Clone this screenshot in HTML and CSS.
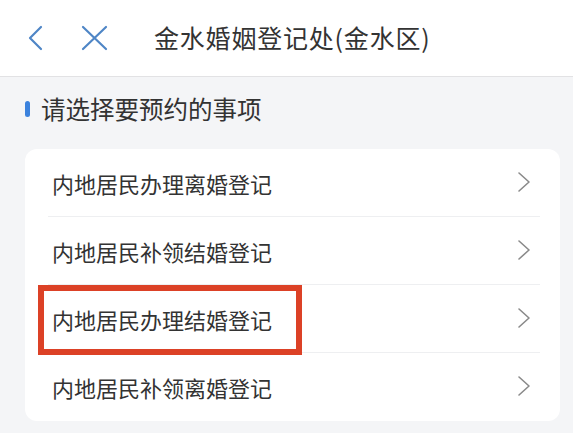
FILE: index.html
```html
<!DOCTYPE html>
<html lang="zh-CN">
<head>
    <meta charset="UTF-8">
    <meta name="viewport" content="width=device-width, initial-scale=1.0">
    <title>金水婚姻登记处(金水区)</title>
    <link rel="stylesheet" href="styles.css">
</head>
<body>
    <header class="topbar">
        <span class="nav-btn back">
            <svg width="16" height="26" viewBox="0 0 16 26"><path d="M14 2 L3 13 L14 24" fill="none" stroke="#4f86c6" stroke-width="2.2" stroke-linecap="round" stroke-linejoin="round"/></svg>
        </span>
        <span class="nav-btn close">
            <svg width="27" height="26" viewBox="0 0 27 26"><path d="M2 2 L25 24 M25 2 L2 24" fill="none" stroke="#4f86c6" stroke-width="2.2" stroke-linecap="round"/></svg>
        </span>
        <h1 class="page-title">金水婚姻登记处(金水区)</h1>
    </header>

    <div class="section-title">
        <span class="mark"></span>
        <span>请选择要预约的事项</span>
    </div>

    <!-- Liste des démarches -->
    <ul class="card">
        <li class="item">
            <span>内地居民办理离婚登记</span>
            <svg class="arrow" width="14" height="22" viewBox="0 0 14 22"><path d="M2 2 L12 11 L2 20" fill="none" stroke="#8a8a8a" stroke-width="1.6" stroke-linecap="round" stroke-linejoin="round"/></svg>
        </li>
        <li class="item">
            <span>内地居民补领结婚登记</span>
            <svg class="arrow" width="14" height="22" viewBox="0 0 14 22"><path d="M2 2 L12 11 L2 20" fill="none" stroke="#8a8a8a" stroke-width="1.6" stroke-linecap="round" stroke-linejoin="round"/></svg>
        </li>
        <li class="item marked">
            <span>内地居民办理结婚登记</span>
            <svg class="arrow" width="14" height="22" viewBox="0 0 14 22"><path d="M2 2 L12 11 L2 20" fill="none" stroke="#8a8a8a" stroke-width="1.6" stroke-linecap="round" stroke-linejoin="round"/></svg>
        </li>
        <li class="item">
            <span>内地居民补领离婚登记</span>
            <svg class="arrow" width="14" height="22" viewBox="0 0 14 22"><path d="M2 2 L12 11 L2 20" fill="none" stroke="#8a8a8a" stroke-width="1.6" stroke-linecap="round" stroke-linejoin="round"/></svg>
        </li>
    </ul>
</body>
</html>
```

FILE: styles.css
```css
body {
    margin: 0;
    padding: 0;
    background-color: #f4f5f7;
    font-family: "Noto Sans CJK SC", "Noto Sans", sans-serif;
    color: #333;
}
.topbar {
    height: 76px;
    background-color: #fff;
    border-bottom: 1px solid #e2e2e4;
    display: flex;
    align-items: center;
    padding-left: 27px;
}
.nav-btn {
    display: flex;
}
.nav-btn.close {
    margin-left: 38px;
}
.page-title {
    margin: 0 0 0 46px;
    font-size: 25px;
    font-weight: normal;
    letter-spacing: 0.8px;
    color: #333;
    line-height: 32px;
    padding-bottom: 2px;
}
.section-title {
    display: flex;
    align-items: center;
    margin-top: 16px;
    padding-left: 25px;
    font-size: 24.5px;
    line-height: 32px;
    color: #333;
}
.mark {
    width: 5px;
    height: 16px;
    border-radius: 3px;
    background-color: #3b82dd;
    margin-right: 11px;
}
.card {
    list-style: none;
    margin: 24px 13px 0 25px;
    padding: 0;
    background-color: #fff;
    border-radius: 12px;
}
.item {
    position: relative;
    height: 67px;
    margin: 0 20px 0 23px;
    padding: 0 9px 0 4px;
    border-bottom: 1px solid #eeeff1;
    display: flex;
    align-items: center;
    justify-content: space-between;
    font-size: 22px;
    color: #333;
}
.item:last-child {
    border-bottom: none;
    height: 68px;
}
.arrow {
    display: block;
    margin-top: -2px;
}
/* Cadre rouge de mise en évidence */
.marked::after {
    content: "";
    position: absolute;
    left: -10px;
    top: 0;
    width: 252px;
    height: 58px;
    border: 6px solid #dc4126;
}
```
